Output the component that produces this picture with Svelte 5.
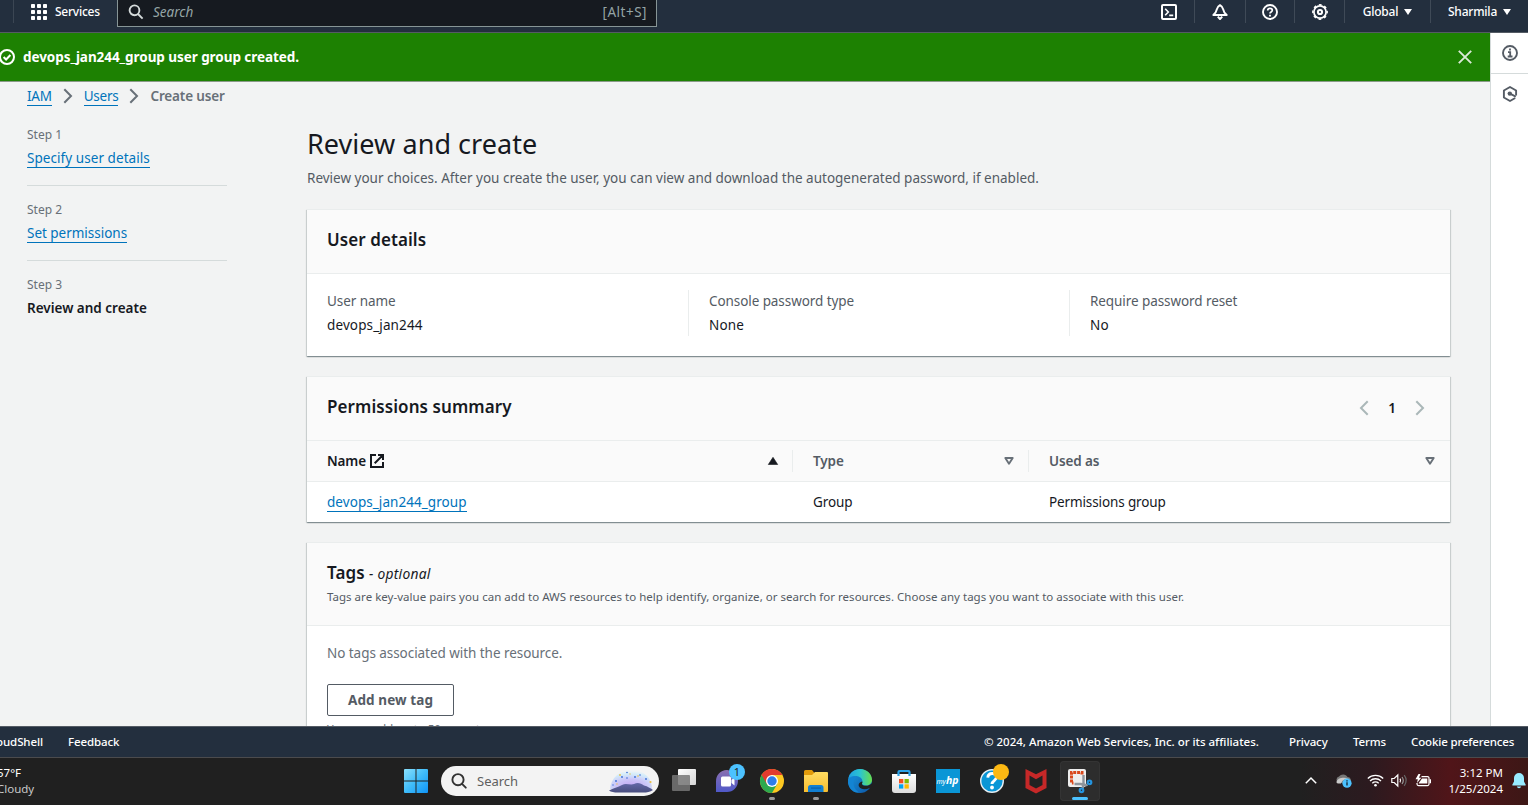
<script>
  const steps = [
    { label: 'Step 1', title: 'Specify user details', link: true },
    { label: 'Step 2', title: 'Set permissions', link: true },
    { label: 'Step 3', title: 'Review and create', link: false }
  ];
  const details = [
    { label: 'User name', value: 'devops_jan244' },
    { label: 'Console password type', value: 'None' },
    { label: 'Require password reset', value: 'No' }
  ];
  const dots = [0, 1, 2, 3, 4, 5, 6, 7, 8];
</script>

<div class="screen">
  <header class="topnav">
    <span class="sep first"></span>
    <svg class="apps" width="16" height="16" viewBox="0 0 16 16" fill="#fff">
      {#each dots as d}
        <rect x={(d % 3) * 6} y={Math.floor(d / 3) * 6} width="4" height="4" rx="0.8" />
      {/each}
    </svg>
    <span class="services">Services</span>
    <div class="search">
      <svg width="16" height="16" viewBox="0 0 16 16" fill="none" stroke="#d5dbdb" stroke-width="1.9"><circle cx="6.5" cy="6.3" r="4.9" /><path d="M10 10l4.6 4.7" /></svg>
      <span class="ph">Search</span>
      <span class="hint">[Alt+S]</span>
    </div>
    <div class="tools">
      <div class="tool" style="width:49px">
        <svg width="16" height="16" viewBox="0 0 16 16" fill="none" stroke="#fff" stroke-width="2"><rect x="1" y="1" width="14" height="14" rx="1" /><path d="M4.2 4.7L7.3 8l-3.1 3.2M8.2 11.4h4" stroke-width="1.6" /></svg>
      </div>
      <div class="tool" style="width:51px">
        <svg width="16" height="16" viewBox="0 0 16 16" fill="none" stroke="#fff" stroke-width="2" stroke-linejoin="round"><path d="M8 1.2C6 2.4 5.2 3.5 4.8 5.4 4.3 8 3.3 9.6 1.3 11h13.4c-2-1.400-3-3-3.500-5.600C10.800 3.500 10 2.400 8 1.200z" /><path d="M5.800 12.600L8 15l2.200-2.400" /></svg>
      </div>
      <div class="tool" style="width:49px">
        <svg width="16" height="16" viewBox="0 0 16 16" fill="none" stroke="#fff" stroke-width="1.900"><circle cx="8" cy="8" r="7" /><path d="M5.700 6.600C5.700 5 6.700 4.300 8 4.300s2.300.800 2.300 2c0 1.700-2.300 1.600-2.300 3.200" stroke-width="1.700" /><path d="M8 10.800v1.700" /></svg>
      </div>
      <div class="tool" style="width:50px">
        <svg width="16" height="16" viewBox="0 0 16 16" fill="none" stroke="#fff"><circle cx="8" cy="8" r="6.100" stroke-width="1.700" /><circle cx="8" cy="8" r="7.200" stroke-width="1.400" stroke-dasharray="2.800 2.855" stroke-dashoffset="1.400" /><circle cx="8" cy="8" r="2.100" stroke-width="2" /></svg>
      </div>
      <div class="tool menu" style="width:86px"><span>Global</span><i class="caret"></i></div>
      <div class="tool menu last" style="width:97px"><span>Sharmila</span><i class="caret"></i></div>
    </div>
  </header>

  <div class="middle">
    <div class="content">
      <div class="flash">
        <svg width="16" height="16" viewBox="0 0 16 16" fill="none" stroke="#fff" stroke-width="2"><circle cx="8" cy="8" r="7" /><path d="M4.600 8l2.500 2.500L11.400 6" /></svg>
        <b>devops_jan244_group user group created.</b>
        <svg class="close" width="14" height="14" viewBox="0 0 14 14" stroke="#dbe9d7" stroke-width="1.900"><path d="M.8.8l12.400 12.400M13.200.8L.8 13.200" /></svg>
      </div>
      <nav class="crumbs">
        <a class="lnk" href="#iam">IAM</a>
        <svg width="10" height="16" viewBox="0 0 10 16" fill="none" stroke="#687078" stroke-width="2"><path d="M1.300 1.200L8 8l-6.700 6.800" /></svg>
        <a class="lnk" href="#users">Users</a>
        <svg width="10" height="16" viewBox="0 0 10 16" fill="none" stroke="#687078" stroke-width="2"><path d="M1.300 1.200L8 8l-6.700 6.800" /></svg>
        <b>Create user</b>
      </nav>
      <div class="columns">
        <aside class="steps">
          {#each steps as s}
            <div class="step">
              <small>{s.label}</small>
              {#if s.link}<a class="lnk" href="#step">{s.title}</a>{:else}<b>{s.title}</b>{/if}
            </div>
          {/each}
        </aside>
        <main>
          <h1>Review and create</h1>
          <p class="lead">Review your choices. After you create the user, you can view and download the autogenerated password, if enabled.</p>

          <section class="card">
            <div class="head"><h2>User details</h2></div>
            <div class="details">
              {#each details as d}
                <div class="pair"><span>{d.label}</span><em>{d.value}</em></div>
              {/each}
            </div>
          </section>

          <section class="card">
            <div class="head">
              <h2 class="perm">Permissions summary</h2>
              <div class="pager">
                <svg width="10" height="16" viewBox="0 0 10 16" fill="none" stroke="#aab7b8" stroke-width="2"><path d="M8.700 1.200L2 8l6.700 6.800" /></svg>
                <b>1</b>
                <svg width="10" height="16" viewBox="0 0 10 16" fill="none" stroke="#aab7b8" stroke-width="2"><path d="M1.300 1.200L8 8l-6.700 6.800" /></svg>
              </div>
            </div>
            <div class="row th">
              <div class="cell dark"><b>Name</b>
                <svg class="ext" width="14" height="14" viewBox="0 0 14 14" fill="none" stroke="#16191f" stroke-width="2"><path d="M6 1H1v12h12V8M8 1h5v5M13 1L4.700 9.300" /></svg>
                <svg class="sort" width="10" height="8" viewBox="0 0 10 8"><path d="M5 .3L9.700 7.500H.3z" fill="#16191f" stroke="#16191f" stroke-width=".6" stroke-linejoin="round" /></svg>
              </div>
              <div class="cell"><b>Type</b><svg class="sort" width="10" height="8" viewBox="0 0 10 8"><path d="M1.300 1h7.400L5 6.800z" fill="none" stroke="#687078" stroke-width="1.900" stroke-linejoin="round" /></svg></div>
              <div class="cell"><b>Used as</b><svg class="sort" width="10" height="8" viewBox="0 0 10 8"><path d="M1.300 1h7.400L5 6.800z" fill="none" stroke="#687078" stroke-width="1.900" stroke-linejoin="round" /></svg></div>
            </div>
            <div class="row td">
              <div class="cell"><a class="lnk" href="#group">devops_jan244_group</a></div>
              <div class="cell">Group</div>
              <div class="cell">Permissions group</div>
            </div>
          </section>

          <section class="card">
            <div class="head tags">
              <h2>Tags <i>- optional</i></h2>
              <p>Tags are key-value pairs you can add to AWS resources to help identify, organize, or search for resources. Choose any tags you want to associate with this user.</p>
            </div>
            <div class="tagbody">
              <p class="none">No tags associated with the resource.</p>
              <button>Add new tag</button>
              <p class="limit">You can add up to 50 more tags.</p>
            </div>
          </section>
        </main>
      </div>
    </div>
    <aside class="panel">
      <div class="pi">
        <svg width="16" height="16" viewBox="0 0 16 16" fill="none" stroke="#545b64" stroke-width="1.900"><circle cx="8" cy="8" r="7" /><path d="M8 3.600v2M6 7.200h2.200v4.200M5.700 11.500h4.800" stroke-width="1.800" /></svg>
      </div>
      <div class="pi second">
        <svg width="16" height="16" viewBox="0 0 16 16" fill="none" stroke="#545b64" stroke-width="1.900" stroke-linejoin="round"><path d="M14.100 9.500v-5L8 1 1.900 4.500v7L8 15l5.200-3" /><circle cx="7.800" cy="7.600" r="2.200" fill="#545b64" stroke="none" /><path d="M8 7.700l5.800 2.900" /></svg>
      </div>
    </aside>
  </div>

  <footer class="foot">
    <span class="shell">CloudShell</span>
    <span class="fb">Feedback</span>
    <span class="copy">© 2024, Amazon Web Services, Inc. or its affiliates.</span>
    <span class="priv">Privacy</span>
    <span class="terms">Terms</span>
    <span class="cookie">Cookie preferences</span>
  </footer>

  <div class="taskbar">
    <div class="weather"><span>57°F</span><span class="dim">Cloudy</span></div>
    <svg class="win" width="24" height="24" viewBox="0 0 24 24">
      <defs><linearGradient id="wg" x1="0" y1="0" x2="1" y2="1"><stop offset="0" stop-color="#8be0fc" /><stop offset=".5" stop-color="#3fbcfa" /><stop offset="1" stop-color="#0f93f5" /></linearGradient></defs>
      <path fill="url(#wg)" d="M1 0h10.500v11.400H0V1a1 1 0 011-1zM12.500 0H23a1 1 0 011 1v10.400H12.500zM0 12.500h11.500V24H1a1 1 0 01-1-1zM12.500 12.500H24V23a1 1 0 01-1 1H12.500z" />
    </svg>
    <div class="wsearch">
      <svg width="16" height="16" viewBox="0 0 16 16" fill="none" stroke="#333" stroke-width="1.900" stroke-linecap="round"><circle cx="7" cy="6.700" r="5.600" /><path d="M11 10.900l3.800 3.800" /></svg>
      <span>Search</span>
      <svg class="art" width="44" height="24" viewBox="0 0 44 24">
        <defs>
          <radialGradient id="sky" cx=".5" cy=".85" r=".8"><stop offset="0" stop-color="#c3a6f3" /><stop offset=".45" stop-color="#cbc4f8" /><stop offset=".8" stop-color="#d3ecfa" /><stop offset="1" stop-color="#f0f3f5" /></radialGradient>
          <linearGradient id="hill" x1="0" y1="0" x2="0" y2="1"><stop offset="0" stop-color="#6468a8" /><stop offset="1" stop-color="#484d7d" /></linearGradient>
        </defs>
        <path d="M1 20C2 9 10 1 23 1s20 9 20 19z" fill="url(#sky)" />
        <path d="M0 21.500c4-2.500 9-3 13-5.500 4-2.500 8 .5 12-1 4-2 7-.5 10 1.500 4 1 6 2.500 9 4.500-3 2-6 2.500-10 2.500H9C5 23.500 2 23 0 21.500z" fill="url(#hill)" />
        <g fill="#3569d4"><circle cx="7" cy="12" r=".9" /><circle cx="13" cy="8" r=".9" /><circle cx="18" cy="3.500" r=".8" /><circle cx="18" cy="9" r=".8" /><circle cx="26" cy="8" r=".9" /><circle cx="31" cy="6" r=".8" /><circle cx="37" cy="10" r=".9" /><circle cx="4" cy="16" r=".7" /></g>
        <g fill="#e9bf45"><circle cx="11" cy="6" r=".9" /><circle cx="21" cy="5" r=".7" /><circle cx="29" cy="7" r=".8" /><circle cx="41.500" cy="13" r="1.100" /><circle cx="8" cy="15" r=".7" /></g>
      </svg>
    </div>
    <div class="apps-row">
      <div class="app">
        <svg width="32" height="32" viewBox="0 0 32 32"><defs><linearGradient id="tv" x1="0" y1="0" x2="1" y2="1"><stop offset="0" stop-color="#fff" /><stop offset="1" stop-color="#d5d5d5" /></linearGradient></defs><rect x="10" y="4" width="18" height="16" rx="1" fill="url(#tv)" /><rect x="4" y="10" width="18" height="16" rx="1" fill="#777" fill-opacity=".85" /></svg>
      </div>
      <div class="app">
        <svg width="32" height="32" viewBox="0 0 32 32"><defs><linearGradient id="ch" x1="0" y1="0" x2="0" y2="1"><stop offset="0" stop-color="#8a6fb0" /><stop offset="1" stop-color="#5059c9" /></linearGradient></defs><path d="M4 27V16.500a11 11 0 1111 10.500z" fill="url(#ch)" /><rect x="9" y="11.500" width="10" height="10" rx="1.500" fill="#fff" /><path d="M19.500 15l3-2.500v8l-3-2.500z" fill="#fff" /><circle cx="25" cy="7" r="8" fill="#4cc2ff" /><text x="25" y="11" text-anchor="middle" font-size="11" fill="#222">1</text></svg>
      </div>
      <div class="app">
        <svg width="32" height="32" viewBox="0 0 32 32"><circle cx="16" cy="16" r="12" fill="#fdc821" /><path d="M5.600 10A12 12 0 0016 28l5.200-9-5.200-3z" fill="#2da94f" /><path d="M5.600 10a12 12 0 0120.800 0H16l-5.200 9z" fill="#e33b2e" /><circle cx="16" cy="16" r="6" fill="#fff" /><circle cx="16" cy="16" r="4.700" fill="#2f7de9" /></svg>
        <i class="pill"></i>
      </div>
      <div class="app">
        <svg width="32" height="32" viewBox="0 0 32 32"><defs><linearGradient id="fd" x1="0" y1="0" x2="0" y2="1"><stop offset="0" stop-color="#ffdc62" /><stop offset="1" stop-color="#f8bd2f" /></linearGradient></defs><path d="M4 8V6.500A1.500 1.500 0 015.500 5H12l2.500 3L12 12H4z" fill="#e29b0b" /><path d="M4 10h8l3-3h12a1 1 0 011 1v18a1 1 0 01-1 1H4z" fill="url(#fd)" /><path d="M8 27v-4.500A2.500 2.500 0 0110.500 20h10.500a2.500 2.500 0 012.500 2.500V27z" fill="#117fd2" /><rect x="11" y="22.500" width="10" height="1.200" fill="#0a5fa8" /></svg>
        <i class="pill"></i>
      </div>
      <div class="app">
        <svg width="32" height="32" viewBox="0 0 32 32"><defs><linearGradient id="e1" x1="0" y1="0" x2="1" y2="0"><stop offset="0" stop-color="#1fa2e4" /><stop offset=".5" stop-color="#2cc5cf" /><stop offset="1" stop-color="#69de4a" /></linearGradient><linearGradient id="e2" x1="0" y1="0" x2="1" y2="1"><stop offset="0" stop-color="#1b9de2" /><stop offset="1" stop-color="#0c54a5" /></linearGradient></defs><circle cx="16" cy="16" r="12" fill="url(#e2)" /><path d="M4.500 13C6 7.500 10.500 4 16 4c7 0 12 5 12 11 0 3.500-3 5.500-6 5.500-2.500 0-4.500-1-4-2.500 1-2 .3-5-3.500-6.500-3.500-1-7.500-.5-10 1.500z" fill="url(#e1)" /><path d="M18.300 16.500c.6 1-.6 1.800-.3 2.800 1 1.800 4.500 2 7.500.7L28.500 18l-1 4.500-2 .5c-4 2-9 1.500-10.500-1.500-1-2.300.5-4.500 3.300-5z" fill="#202020" /><path d="M11 14c-3 3-1.500 10 4 13.500-6 1-11-5-11-11C5 12 9 11 13 12z" fill="#1384d3" /></svg>
      </div>
      <div class="app">
        <svg width="32" height="32" viewBox="0 0 32 32"><defs><linearGradient id="st" x1="0" y1="0" x2="0" y2="1"><stop offset="0" stop-color="#fff" /><stop offset="1" stop-color="#dcdcdc" /></linearGradient></defs><path d="M4 9h24v16a3 3 0 01-3 3H7a3 3 0 01-3-3z" fill="url(#st)" /><path d="M10.500 11V7a1 1 0 011-1h9a1 1 0 011 1v4" fill="none" stroke="#2ba2e8" stroke-width="2.200" /><path d="M11 14h4.300v4.300H11z" fill="#f25022" /><path d="M16.500 14h4.300v4.300h-4.300z" fill="#7fba00" /><path d="M11 19.300h4.300v4.300H11z" fill="#00a4ef" /><path d="M16.500 19.300h4.300v4.300h-4.300z" fill="#ffb900" /></svg>
      </div>
      <div class="app">
        <svg width="32" height="32" viewBox="0 0 32 32"><rect x="4" y="4" width="24" height="24" fill="#0a96d6" /><text class="hp" x="15.500" y="19" text-anchor="middle" fill="#fff"><tspan font-size="7">my</tspan><tspan font-size="10.500" font-weight="700">hp</tspan></text></svg>
      </div>
      <div class="app">
        <svg width="32" height="32" viewBox="0 0 32 32"><circle cx="16" cy="16" r="11.300" fill="#0a96d6" stroke="#e6eef3" stroke-width="1.400" /><path d="M11.800 12.700c.2-3 2-4.200 4.500-4.200 2.600 0 4.300 1.400 4.300 3.600 0 3.400-4.600 3.500-4.600 6.800" fill="none" stroke="#fff" stroke-width="2.900" /><circle cx="16" cy="22.500" r="1.900" fill="#fff" /><circle cx="25" cy="7" r="8" fill="#fdb913" /></svg>
      </div>
      <div class="app">
        <svg width="32" height="32" viewBox="0 0 32 32"><path d="M5.500 4L16 9.200 26.500 4v19L16 28.500 5.500 23z" fill="#c62828" /><path d="M9.500 10.500l6.500 3.700 6.500-3.700V20L16 23.500 9.500 20z" fill="#222" /></svg>
      </div>
      <div class="app active">
        <svg width="32" height="32" viewBox="0 0 32 32"><rect x="4" y="4" width="18" height="18" rx="2" fill="#eee" /><path d="M18 9.500V7.500H7.500V18h2" fill="none" stroke="#d9481c" stroke-width="3" stroke-dasharray="3 .9" /><path d="M19.500 10v8c0 2 1.800 2.500 4 1.600M10.500 19H17c2.200 0 2.600 2 1.500 4.500" fill="none" stroke="#8d949c" stroke-width="2.400" /><g fill="none" stroke="#2494df" stroke-width="2.200"><circle cx="25.500" cy="17.300" r="1.800" /><circle cx="17.500" cy="25.300" r="1.800" /></g></svg>
        <i class="pill on"></i>
      </div>
    </div>
    <div class="tray">
      <svg class="up" width="12" height="7" viewBox="0 0 12 7" fill="none" stroke="#fff" stroke-width="1.500"><path d="M.8 6.200L6 1l5.200 5.200" /></svg>
      <svg class="cloud" width="17" height="15" viewBox="0 0 17 15"><path d="M3.500 10A3.400 3.400 0 014 3.600 5 5 0 0112.500 4a3.500 3.500 0 012.500 6z" fill="#777" /><path d="M1.500 9.500C2 5 8 4 14 5.500c-4 0-7 2-8 5H3.500a2 2 0 01-2-1z" fill="#c9c9c9" /><circle cx="12" cy="10.200" r="4.600" fill="#4cc2ff" /><path d="M12 9.300v3.200M12 7.200v1.200" stroke="#152b3a" stroke-width="1.400" /></svg>
      <svg class="wifi" width="17" height="13" viewBox="0 0 17 13" fill="none" stroke="#fff" stroke-width="1.300"><path d="M.8 4.500a11 11 0 0115.400 0M3 7a7.800 7.800 0 0111 0M5.300 9.300a4.600 4.600 0 016.400 0" /><circle cx="8.500" cy="11.300" r="1.300" fill="#fff" stroke="none" /></svg>
      <svg class="vol" width="17" height="13" viewBox="0 0 17 13" fill="none" stroke="#fff" stroke-width="1.200"><path d="M.8 4.500h2.400L6.800 1v11L3.200 8.500H.8z" /><path d="M9 4.600q1.200 1.900 0 3.800" /><path d="M11 3q2.600 3.500 0 7" stroke="#999" /><path d="M13.200 1.200q4 5.300 0 10.600" stroke="#666" /></svg>
      <svg class="bat" width="17" height="14" viewBox="0 0 17 14"><path d="M6.500 2.600h6a1.500 1.500 0 011.500 1.500v6a1.500 1.500 0 01-1.500 1.500h-9A1.500 1.500 0 012 10.100V9" fill="none" stroke="#fff" stroke-width="1.200" /><path d="M7 4.600h5.300v5H3.800V9z" fill="#fff" /><path d="M14.500 5.200H16v4h-1.500z" fill="#fff" /><path d="M3.500 0L.5 5.200h2.300L2 9l4.300-5.300H4L5.500 0z" fill="#fff" /></svg>
      <div class="clock"><span>3:12 PM</span><span>1/25/2024</span></div>
      <svg class="bell" width="14" height="16" viewBox="0 0 14 16" fill="#99ebff"><path d="M7 0a5 5 0 00-5 5v3.500L.4 11.500c-.3.600 0 1 .6 1h12c.6 0 .9-.4.600-1L12 8.500V5a5 5 0 00-5-5zM4.800 13.500a2.300 2.300 0 004.400 0z" /></svg>
    </div>
  </div>
</div>

<style>
  :global(body) { margin: 0; overflow: hidden; }
  .screen {
    width: 1528px; height: 805px; overflow: hidden;
    display: grid; grid-template-rows: 33px 693px 31px 48px;
    font: 13.500px/20px "Noto Sans", "Open Sans", sans-serif; color: #16191f;
    background: #f2f3f3;
  }
  svg { display: block; flex: none; overflow: visible; }
  h1, h2, p { margin: 0; font-weight: 400; }
  b, h2 { font-weight: 600; }
  span, b, a, p, h1, h2 { white-space: nowrap; }
  .lnk { color: #0073bb; text-decoration: none; border-bottom: 1px solid #0073bb; line-height: 17px; display: inline-block; margin-top: 2px; letter-spacing: 0.060px; }

  .topnav { box-sizing: border-box; background: #232f3e; border-bottom: 1px solid #545b64; display: flex; align-items: flex-start; color: #fff; font-size: 12px; font-weight: 500; }
  .sep.first { width: 1px; height: 23px; margin-left: 13px; background: #3b4653; }
  .apps { margin: 4px 0 0 17px; }
  .services { width: 62px; margin: 2px 0 0 8px; letter-spacing: -0.250px; }
  .search { box-sizing: border-box; width: 540px; height: 27px; background: #161a20; border: 1px solid #879596; border-top: 0; display: flex; align-items: flex-start; padding: 4px 9px 0 10px; color: #95a5a6; font-size: 13.500px; font-weight: 400; }
  .ph { font-style: italic; margin: -2px 0 0 9px; }
  .hint { margin: -2px 0 0 auto; letter-spacing: 0.500px; }
  .tools { display: flex; margin-left: auto; }
  .tool { box-sizing: border-box; height: 23px; display: flex; justify-content: center; padding-top: 4px; border-right: 1px solid #3f4a57; }
  .tool:first-child { padding-right: 2px; }
  .tool.menu { padding-top: 2px; gap: 6px; letter-spacing: -0.200px; }
  .tool.last { border: 0; }
  .caret { margin-top: 7px; width: 0; height: 0; border: 4px solid transparent; border-top: 6px solid #fff; border-bottom: 0; }

  .middle { display: grid; grid-template-columns: 1490px 38px; overflow: hidden; }
  .content { overflow: hidden; }
  .flash { box-sizing: border-box; height: 49px; background: #1d8102; border-bottom: 1px solid #8a9a88; color: #fff; display: flex; align-items: center; padding: 0 18px 0 0; }
  .flash > svg:first-child { margin-left: -1px; }
  .flash b { margin-left: 8px; font-weight: 700; letter-spacing: -0.060px; }
  .flash .close { margin-left: auto; }
  .crumbs { height: 28px; display: flex; align-items: center; padding-left: 27px; }
  .crumbs svg { margin: 0 11px; }
  .crumbs .lnk { letter-spacing: -0.250px; }
  .crumbs b { color: #687078; letter-spacing: -0.150px; }
  .columns { display: flex; padding: 15px 40px 0 27px; }
  .steps { width: 200px; margin-right: 80px; flex: none; }
  .step { box-sizing: border-box; height: 75px; border-bottom: 1px solid #d5dbdb; display: flex; flex-direction: column; align-items: flex-start; }
  .step:first-child { height: 61px; }
  .step:nth-child(2) { padding-top: 14px; }
  .step:nth-child(2) .lnk { letter-spacing: -0.020px; }
  .step:last-child { border: 0; padding-top: 14px; }
  .step small { font-size: 12px; line-height: 20px; color: #687078; margin-bottom: 3px; }
  main { width: 1143px; flex: none; }
  h1 { font-size: 27px; line-height: 36px; padding-top: 1px; letter-spacing: 0.050px; }
  .lead { color: #545b64; margin: 6px 0 21px; }
  .card { background: #fff; box-shadow: 0 1px 1px 0 rgba(0, 28, 36, .3), 1px 1px 1px 0 rgba(0, 28, 36, .12), -1px 1px 1px 0 rgba(0, 28, 36, .12); border-top: 1px solid #eaeded; box-sizing: border-box; margin-bottom: 20px; }
  .head { box-sizing: border-box; height: 64px; background: #fafafa; border-bottom: 1px solid #eaeded; padding: 18px 20px 0; display: flex; justify-content: space-between; }
  h2 { font-size: 17px; line-height: 24px; letter-spacing: 0.080px; }
  .details { height: 82px; display: grid; grid-template-columns: 382px 381px 1fr; box-sizing: border-box; padding-top: 16px; }
  .pair { height: 46px; box-sizing: border-box; border-right: 1px solid #eaeded; padding: 1px 0 0 20px; display: flex; flex-direction: column; gap: 4px; }
  .pair:last-child { border: 0; }
  .pair span { color: #545b64; letter-spacing: -0.080px; }
  .pair em { font-style: normal; letter-spacing: 0.120px; }
  .pager { display: flex; gap: 19px; padding: 5px 5px 0 0; line-height: 17px; }
  .row { display: grid; grid-template-columns: 486px 236px 1fr; height: 40px; align-items: center; }
  .row.th { background: #fafafa; border-bottom: 1px solid #eaeded; }
  .cell { padding-left: 20px; display: flex; align-items: center; height: 22px; letter-spacing: -0.120px; }
  .th .cell { color: #545b64; border-right: 1px solid #eaeded; padding-right: 14px; }
  .th .cell.dark { color: #16191f; }
  .th .cell:last-child { border: 0; padding-right: 15px; }
  .ext { margin-left: 4px; }
  .sort { margin-left: auto; }
  .head.tags { height: 83px; flex-direction: column; justify-content: flex-start; }
  .tags i { font-size: 13.800px; font-weight: 400; letter-spacing: 0.250px; }
  .tags p { font-size: 11.500px; line-height: 20px; margin-top: 1px; color: #545b64; letter-spacing: 0.025px; }
  .tagbody { padding: 17px 20px 0; height: 200px; }
  .none { color: #687078; letter-spacing: -0.050px; }
  button { display: block; box-sizing: border-box; width: 127px; height: 32px; margin-top: 21px; background: #fff; border: 1px solid #545b64; border-radius: 2px; color: #545b64; font: 700 13.500px/20px "Noto Sans", sans-serif; letter-spacing: 0.100px; padding: 0; }
  .limit { font-size: 11.700px; line-height: 16px; color: #687078; margin-top: 5px; letter-spacing: -0.050px; }
  .panel { background: #fff; border-left: 1px solid #d5dbdb; }
  .pi { box-sizing: border-box; height: 41px; display: flex; justify-content: center; align-items: center; border-bottom: 1px solid #d5dbdb; padding-left: 1px; }
  .pi.second { border: 0; height: 40px; }

  .foot { box-sizing: border-box; background: #232f3e; border-top: 1px solid #545b64; color: #fff; display: flex; align-items: center; font-size: 11.500px; font-weight: 500; letter-spacing: -0.100px; }
  .shell { width: 60px; display: flex; justify-content: flex-end; margin-left: -17px; }
  .fb { margin-left: 25px; }
  .copy { margin-left: auto; width: 275px; letter-spacing: -0.010px; }
  .priv { margin-left: 30px; width: 40px; }
  .terms { margin-left: 24px; width: 34px; }
  .cookie { margin-left: 24px; width: 117px; letter-spacing: -0.150px; }

  .taskbar { box-sizing: border-box; padding-bottom: 2px; border-top: 1px solid #4b4b4d; display: flex; align-items: center; color: #fff; font-size: 12px; background: linear-gradient(90deg, #202020 0, #202020 1300px, #2c1a1f 1370px, #501519 1450px, #3d1716 1528px); }
  .weather { width: 60px; display: flex; flex-direction: column; line-height: 16px; margin-left: -3px; font-size: 11.500px; }
  .dim { color: #c8c8c8; }
  .win { margin-left: 347px; }
  .wsearch { box-sizing: border-box; width: 218px; height: 30px; border-radius: 15px; background: #f3f3f3; margin-left: 13px; display: flex; align-items: center; padding: 0 6px 0 10px; color: #5f5f5f; font-size: 13px; }
  .wsearch span { margin-left: 10px; }
  .art { margin-left: auto; }
  .apps-row { display: flex; gap: 4px; margin-left: 5px; }
  .app { position: relative; width: 40px; height: 40px; display: flex; align-items: center; justify-content: center; border-radius: 4px; }
  .app.active { background: #2d2d2d; box-shadow: inset 0 0 0 1px #343434; }
  .pill { position: absolute; bottom: 1px; left: 17px; width: 6px; height: 3px; border-radius: 2px; background: #9a9a9a; }
  .pill.on { left: 12px; width: 16px; background: #4cc2ff; }
  .hp { font-style: italic; }
  .tray { display: flex; align-items: center; margin-left: auto; }
  .cloud { margin-left: 18px; }
  .wifi { margin-left: 15px; }
  .vol { margin-left: 7px; }
  .bat { margin-left: 7px; }
  .clock { width: 71px; display: flex; flex-direction: column; align-items: flex-end; line-height: 16px; font-size: 11.500px; }
  .bell { margin: 0 2px 0 9px; }
</style>
